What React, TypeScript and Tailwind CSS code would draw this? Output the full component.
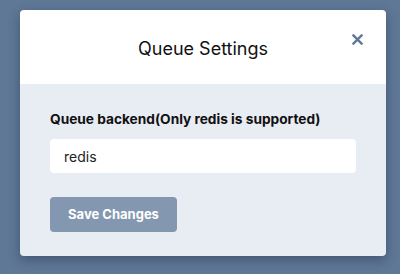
export default function App() {
  return (
    <div
      className="h-[274px] w-[400px] bg-[#5f7896] pt-[10px] pl-[20px]"
      style={{ fontFamily: "Inter, 'Noto Sans', sans-serif" }}
    >
      <div className="w-[366px] overflow-hidden rounded-[4px] shadow-[0_4px_12px_rgba(30,45,70,0.45)]">
        {/* Header */}
        <div className="relative flex h-[74px] items-center justify-center bg-white pt-[2px]">
          <h2 className="text-[18px] font-normal text-[#111]">Queue Settings</h2>
          <button
            type="button"
            aria-label="Close"
            className="absolute top-[23px] right-[23px] flex h-[12px] w-[12px] items-center justify-center"
          >
            <svg viewBox="0 0 12 12" width="11" height="11">
              <path d="M1.5 1.5 L10.5 10.5 M10.5 1.5 L1.5 10.5" stroke="#5f7896" strokeWidth="2.6" strokeLinecap="round" />
            </svg>
          </button>
        </div>

        {/* Body */}
        <div className="flex h-[172px] flex-col bg-[#e8ecf3] px-[30px] pt-[25px]">
          <label className="text-[13.7px] font-bold leading-[20px] text-[#111]">
            Queue backend(Only redis is supported)
          </label>
          <div className="mt-[10px] flex h-[34px] items-center rounded-[4px] bg-white px-[14px] text-[14px] text-[#222]">
            redis
          </div>
          <button
            type="button"
            className="mt-[24px] h-[35px] w-[127px] rounded-[4px] bg-[#8497b0] text-[13px] font-bold text-white"
          >
            Save Changes
          </button>
        </div>
      </div>
    </div>
  );
}
